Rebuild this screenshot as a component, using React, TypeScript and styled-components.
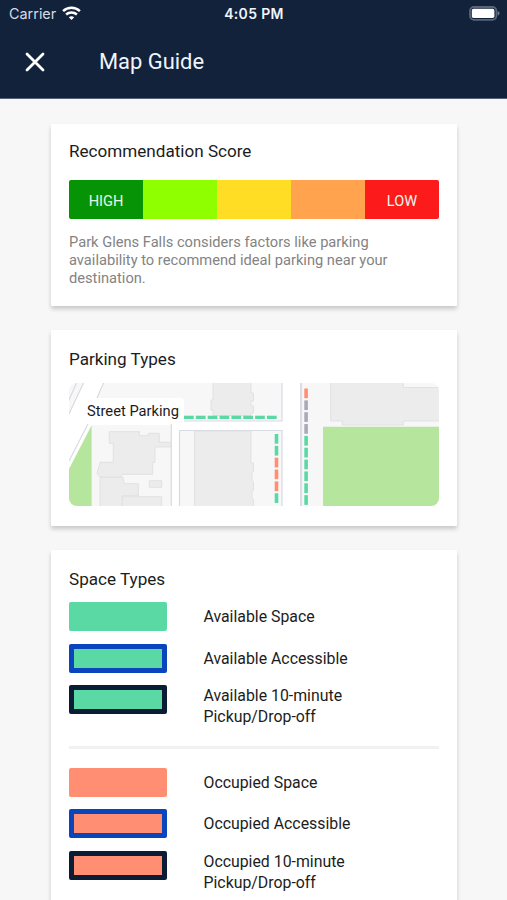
import React from "react";
import styled, { createGlobalStyle } from "styled-components";

const GlobalStyle = createGlobalStyle`
  * { box-sizing: border-box; }
  html, body { margin: 0; height: 900px; overflow: hidden; background: #f7f7f7; }
  body { font-family: Roboto, sans-serif; color: #1c1c1c; }
`;

const Screen = styled.div`
  width: 507px;
  height: 900px;
  overflow: hidden;
  background: #f7f7f7;
`;

const Header = styled.header`
  height: 99px;
  background: #13223b;
  border-bottom: 1px solid #56607a;
  color: #f0f5fc;
`;

const StatusBar = styled.div`
  height: 27px;
  display: grid;
  grid-template-columns: 1fr auto 1fr;
  align-items: center;
  padding: 0 7px 0 9px;
  font-family: Inter, sans-serif;
`;

const Carrier = styled.div`
  display: flex;
  align-items: center;
  gap: 6px;
  font-size: 14.4px;
  color: #d5dbe4;
`;

const Clock = styled.div`
  margin-right: 1px;
  font-size: 14px;
  font-weight: 600;
  letter-spacing: 0.35px;
`;

const BatteryIcon = styled.svg`
  justify-self: end;
`;

const TitleBar = styled.div`
  height: 71px;
  display: flex;
  align-items: center;
  padding: 0 0 1px 25px;
`;

const CloseButton = styled.button`
  width: 20px;
  height: 20px;
  padding: 0;
  border: 0;
  background: none;
  display: flex;
`;

const PageTitle = styled.h1`
  margin: 0 0 0 54px;
  font-size: 21.9px;
  line-height: 26px;
  font-weight: 400;
`;

const Content = styled.main`
  display: flex;
  flex-direction: column;
  gap: 24px;
  padding: 25px 50px 0 51px;
`;

const Card = styled.section<{ $height: number }>`
  height: ${(p) => p.$height}px;
  padding: 17px 18px 0;
  background: #fff;
  border-radius: 1px;
  box-shadow: 0 3px 4px rgba(0, 0, 0, 0.19);
`;

const CardTitle = styled.h2<{ $top?: number; $gap: number }>`
  margin: 0 0 ${(p) => p.$gap}px;
  padding-top: ${(p) => p.$top ?? 0}px;
  font-size: 17.1px;
  line-height: 20px;
  font-weight: 400;
`;

const ScoreScale = styled.div`
  display: grid;
  grid-template-columns: repeat(5, 1fr);
  height: 39px;
  border-radius: 2px;
  overflow: hidden;
`;

const ScoreStep = styled.div<{ $color: string }>`
  display: flex;
  align-items: center;
  justify-content: center;
  padding-top: 3px;
  background: ${(p) => p.$color};
  color: #e9f7ea;
  font-size: 14.6px;
`;

const Description = styled.p`
  margin: 13.5px 0 0;
  font-size: 14.66px;
  line-height: 18.4px;
  color: #838383;
`;

const MapPreview = styled.div`
  position: relative;
  height: 123px;
  border-radius: 8px;
  overflow: hidden;
`;

const MapDrawing = styled.svg`
  display: block;
`;

const MapLabel = styled.div`
  position: absolute;
  left: 12px;
  top: 15px;
  width: 103px;
  height: 26px;
  padding-left: 6px;
  border-radius: 3px;
  background: #fff;
  font-size: 14.7px;
  line-height: 27px;
  white-space: nowrap;
`;

const SpaceList = styled.ul`
  margin: 0;
  padding: 0;
  list-style: none;
  display: flex;
  flex-direction: column;
`;

const SpaceRow = styled.li`
  height: 41.5px;
  display: flex;
  align-items: flex-start;
`;

const Swatch = styled.div<{ $fill: string; $outline?: string }>`
  flex: none;
  width: 98px;
  height: 29px;
  margin-right: 36.5px;
  border-radius: 2px;
  background: ${(p) => p.$fill};
  border: ${(p) => (p.$outline ? `5px solid ${p.$outline}` : "0")};
`;

const SpaceName = styled.div`
  min-height: 29px;
  display: flex;
  align-items: center;
  font-size: 15.85px;
  line-height: 21px;
  white-space: pre-line;
`;

const Divider = styled.hr`
  height: 3px;
  margin: 19.5px 0 18.8px;
  border: 0;
  background: #f1f1f2;
`;

const GREEN = "#5ad9a4";
const CORAL = "#ff8e72";
const BLUE = "#0b45bd";
const NAVY = "#0b1c35";
const GRAY = "#a9a9b8";

type Space = { name: string; outline?: string };

const spaces: Space[] = [
  { name: "Space" },
  { name: "Accessible", outline: BLUE },
  { name: "10-minute\nPickup/Drop-off", outline: NAVY },
];

const scores = [
  { color: "#069406", label: "HIGH" },
  { color: "#8fff00", label: "" },
  { color: "#ffdd24", label: "" },
  { color: "#ffa34e", label: "" },
  { color: "#fc1a1b", label: "LOW" },
];

const eastSide = [GREEN, GREEN, CORAL, CORAL, CORAL, GREEN];
const avenue = [CORAL, GRAY, GRAY, GRAY, GREEN, GREEN, GREEN, GREEN, GREEN, GREEN];

function ParkingMap() {
  return (
    <MapDrawing width="370" height="123" viewBox="0 0 370 123" aria-hidden="true">
      <rect width="370" height="123" fill="#fff" />
      <g fill="#f7f7f8">
        <path d="M-2-1H8L-1 19Z" />
        <path d="M8-1H15L-1 33V19Z" />
        <path d="M35-1H213V38H102V15H28Z" />
        <path d="M23 42H102.3V124H23Z" />
        <path d="M110.5 47.5H213V124H110.5Z" />
        <path d="M232-1H372V124H232Z" />
      </g>
      <path d="M22.7 42V123H0V86Z" fill="#b6e59e" />
      <path d="M254 43.8H370V123H254Z" fill="#b6e59e" />
      <g stroke="#d9dbe3" strokeWidth="1.2" fill="none">
        <path d="M8-1L-1 19M15-1L-1 33M35-1L28 15M19 41L-1 80" />
        <path d="M102.3 41V124M110.5 124V47.5H213V124M115 38H213V-1" />
      </g>
      <path d="M232-1V124" stroke="#d9d9e2" strokeWidth="1.8" />
      <g fill="#ececec" stroke="#e0e0e0" strokeWidth="0.9">
        <path d="M40.3 48.7H70.3V52.7H79.3V50.3H90.3V59.3H101.7V64H86V79.3H83.7V91.3H53.7L51.7 94.3H31L28 90.3L31 79.3H44.3V60.3H40.3Z" />
        <path d="M31 94.3H54L55 100.7H69.3V112.7H53.3V124H31Z" />
        <path d="M53.3 113.7H92.7V124H53.3Z" />
        <path d="M80.3 97.7H92.7V104.3H80.3Z" />
        <path d="M144-1H182V10H184.5V18H182V23H184.5V30H182V32.5H144V27H142V17H144Z" />
        <path d="M125.5 48H182V80H184.5V88L183 90V97L184.5 99V107L183 109V115L184.5 117V124H125.5Z" />
        <path d="M261.7-1H334.3V4.5H371V38H334.3V42H273.3V38H261.7Z" />
      </g>
      {Array.from({ length: 8 }, (_, i) => (
        <rect key={i} x={115 + i * 11.85} y="32.7" width="9.7" height="3.3" fill={GREEN} />
      ))}
      {eastSide.map((color, i) => (
        <rect key={i} x="205.7" y={51 + i * 11.85} width="3.6" height="9.7" fill={color} />
      ))}
      {avenue.map((color, i) => (
        <rect key={i} x="235.3" y={5.5 + i * 11.85} width="3.6" height="9.7" fill={color} />
      ))}
    </MapDrawing>
  );
}

function SpaceGroup({ status, fill }: { status: string; fill: string }) {
  return (
    <SpaceList>
      {spaces.map((space) => (
        <SpaceRow key={space.name}>
          <Swatch $fill={fill} $outline={space.outline} />
          <SpaceName>{`${status} ${space.name}`}</SpaceName>
        </SpaceRow>
      ))}
    </SpaceList>
  );
}

export default function App() {
  return (
    <Screen>
      <GlobalStyle />
      <Header>
        <StatusBar>
          <Carrier>
            Carrier
            <svg width="19" height="15" viewBox="0 0 19 15" fill="none" stroke="#fff" strokeWidth="2.5">
              <path d="M1.1 5.1C5.8.7 13.2.7 17.9 5.1" />
              <path d="M4.1 8.5C7.1 5.7 11.9 5.7 14.9 8.5" />
              <path d="M6.8 11.3C8.3 9.9 10.7 9.9 12.2 11.3L9.5 14Z" fill="#fff" stroke="none" />
            </svg>
          </Carrier>
          <Clock>4:05 PM</Clock>
          <BatteryIcon width="31" height="15" viewBox="0 0 31 15">
            <rect x="1" y="1" width="26.4" height="12.8" rx="4" fill="none" stroke="#596478" strokeWidth="1.8" />
            <rect x="2.8" y="2.8" width="22.6" height="9.2" rx="1.8" fill="#fff" />
            <path d="M28.6 5C31.2 5.8 31.2 8.8 28.6 9.6Z" fill="#727b8c" />
          </BatteryIcon>
        </StatusBar>
        <TitleBar>
          <CloseButton aria-label="Close">
            <svg width="20" height="20" viewBox="0 0 20 20" stroke="#fff" strokeWidth="2.8" strokeLinecap="round">
              <path d="M2 2L18 18M18 2L2 18" />
            </svg>
          </CloseButton>
          <PageTitle>Map Guide</PageTitle>
        </TitleBar>
      </Header>
      <Content>
        <Card $height={182}>
          <CardTitle $gap={19}>Recommendation Score</CardTitle>
          <ScoreScale>
            {scores.map((score) => (
              <ScoreStep key={score.color} $color={score.color}>
                {score.label}
              </ScoreStep>
            ))}
          </ScoreScale>
          <Description>
            Park Glens Falls considers factors like parking
            <br />
            availability to recommend ideal parking near your
            <br />
            destination.
          </Description>
        </Card>
        <Card $height={196}>
          <CardTitle $top={2} $gap={14}>Parking Types</CardTitle>
          <MapPreview>
            <ParkingMap />
            <MapLabel>Street Parking</MapLabel>
          </MapPreview>
        </Card>
        <Card $height={380}>
          <CardTitle $top={2} $gap={13}>Space Types</CardTitle>
          <SpaceGroup status="Available" fill={GREEN} />
          <Divider />
          <SpaceGroup status="Occupied" fill={CORAL} />
        </Card>
      </Content>
    </Screen>
  );
}
